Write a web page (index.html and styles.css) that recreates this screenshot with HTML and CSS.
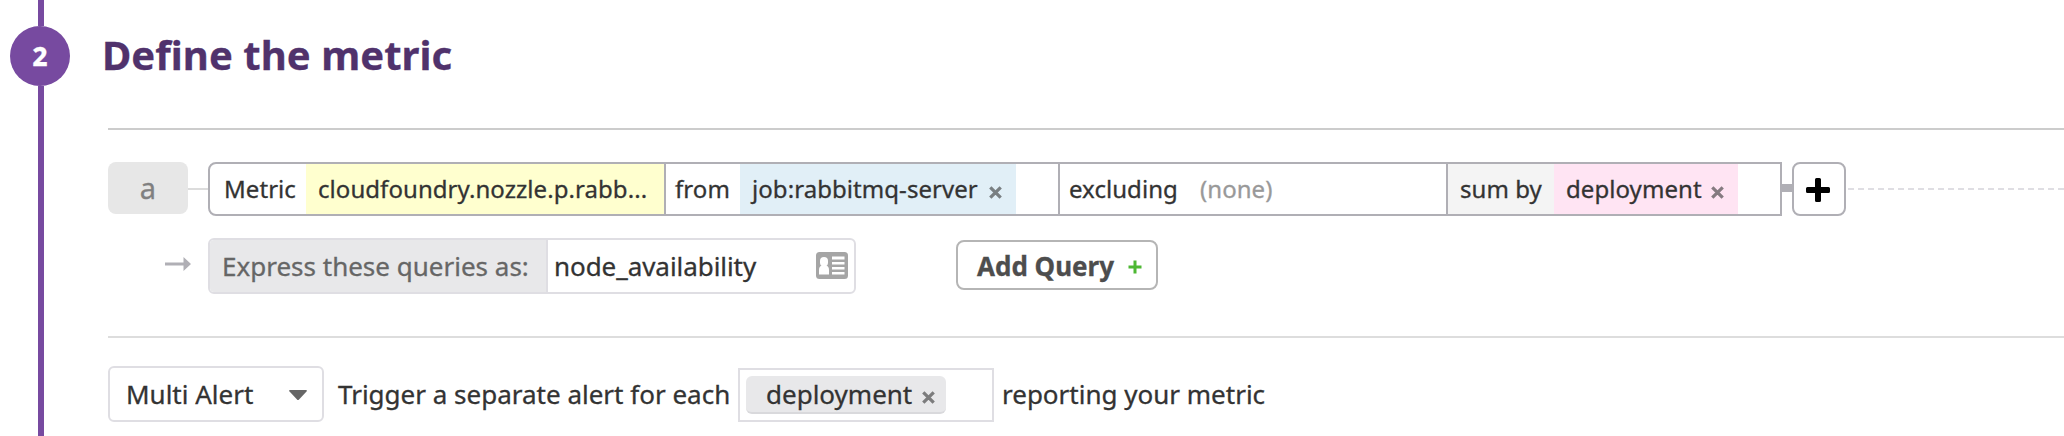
FILE: index.html
```html
<!DOCTYPE html>
<html lang="en">
<head>
<meta charset="utf-8">
<title>Define the metric</title>
<link rel="stylesheet" href="styles.css">
</head>
<body>
<main class="step">
  <aside class="rail">
    <div class="rail-line rail-top"></div>
    <div class="step-number">2</div>
    <div class="rail-line rail-bottom"></div>
  </aside>
  <section class="content">
    <h1 class="title">Define the metric</h1>
    <div class="query-area">
      <div class="query-row">
        <div class="query-letter">a</div>
        <div class="link"></div>
        <div class="query-box">
          <div class="cell cell-metric"><span class="label">Metric</span><span class="token token-metric">cloudfoundry.nozzle.p.rabb...</span></div>
          <div class="cell cell-from"><span class="label">from</span><span class="token token-from">job:rabbitmq-server<svg class="x" viewBox="0 0 12 12"><path d="M1.2 1.2 10.8 10.8M10.8 1.2 1.2 10.8"/></svg></span></div>
          <div class="cell cell-excluding"><span class="label">excluding</span><span class="none">(none)</span></div>
          <div class="cell cell-sum"><span class="label">sum by</span><span class="token token-sum">deployment<svg class="x" viewBox="0 0 12 12"><path d="M1.2 1.2 10.8 10.8M10.8 1.2 1.2 10.8"/></svg></span></div>
        </div>
        <div class="thick-link"></div>
        <button class="plus-button" aria-label="Add function"><svg class="plus" viewBox="0 0 24 24"><path d="M10.5 0h3a1.5 1.5 0 0 1 1.5 1.5V9h7.5A1.5 1.5 0 0 1 24 10.500v3a1.500 1.500 0 0 1-1.500 1.500H15v7.500a1.500 1.500 0 0 1-1.500 1.500h-3A1.500 1.500 0 0 1 9 22.500V15H1.500A1.500 1.500 0 0 1 0 13.500v-3A1.500 1.500 0 0 1 1.500 9H9V1.500A1.500 1.500 0 0 1 10.500 0z"/></svg></button>
        <div class="dashes"></div>
      </div>
      <div class="express-row">
        <svg class="arrow" viewBox="0 0 26 14"><path d="M0 5.500h18.500V0L26 7l-7.500 7V8.500H0z"/></svg>
        <div class="express-box">
          <div class="express-label">Express these queries as:</div>
          <div class="express-value"><span>node_availability</span>
            <svg class="card" viewBox="0 0 32 27"><rect width="32" height="27" rx="3.500" fill="#a5a5a5"/><g fill="#fff"><rect x="4" y="5" width="8" height="9.500" rx="4"/><path d="M3 22.500V18q0-4 3-4.500h4q3 .5 3 4.500v4.500zM16 4.500h12.500v3H16zM16 10h12.500v2.500H16zM16 15h12.500v2.500H16zM16 20h12.500v2.500H16z"/></g></svg>
          </div>
        </div>
        <button class="add-query"><span>Add Query</span><svg class="green" viewBox="0 0 14 14"><path d="M7 .5v13M.5 7h13"/></svg></button>
      </div>
    </div>
    <div class="alert-row">
      <div class="select"><span>Multi Alert</span><svg class="caret" viewBox="0 0 18 10"><path d="M1 0h16q1.500 0 .5 1.500L10 9.500q-1 1-2 0L.5 1.500Q-.5 0 1 0z"/></svg></div>
      <span class="trigger">Trigger a separate alert for each</span>
      <div class="group-box"><span class="chip">deployment<svg class="x" viewBox="0 0 12 12"><path d="M1.2 1.2 10.8 10.8M10.8 1.2 1.2 10.8"/></svg></span></div>
      <span class="reporting">reporting your metric</span>
    </div>
  </section>
</main>
</body>
</html>
```
FILE: styles.css
```css
* { box-sizing: border-box; }
body {
  margin: 0;
  background: #fff;
  color: #333;
  font: 26px/36px "Noto Sans", sans-serif;
  -webkit-text-stroke-width: .3px;
  overflow: hidden;
}
svg { display: block; flex: none; }
button { font: inherit; background: #fff; padding: 0; margin: 0; }
span { white-space: nowrap; }

.step { display: flex; height: 436px; }

/* Step rail */
.rail { width: 104px; flex: none; padding-left: 10px; display: flex; flex-direction: column; }
.rail-line { width: 6px; margin-left: 28px; background: #774aa0; }
.rail-top { height: 26px; }
.rail-bottom { flex: 1; }
.step-number {
  width: 60px; height: 60px; border-radius: 50%;
  background: #774aa0; color: #fff;
  font-weight: 800; font-size: 26px; line-height: 60px; text-align: center;
}

.content { flex: 1; min-width: 0; padding-left: 4px; }
.title {
  height: 128px; margin: 0 0 0 -6px; padding-top: 27px;
  font-size: 40px; line-height: 56px; letter-spacing: .06px; color: #50326c;
}

/* Query builder */
.query-area {
  height: 210px; padding-top: 32px;
  border-top: 2px solid #ccc; border-bottom: 2px solid #ddd;
}
.query-row { display: flex; height: 54px; font-size: 24px; letter-spacing: .06px; }
.query-letter {
  width: 80px; height: 52px; border-radius: 8px; background: #e7e7e7;
  color: #808080; font-size: 29px; line-height: 51px; text-align: center;
}
.link { width: 20px; height: 2px; margin-top: 26px; background: #dcdcdc; }
.query-box { display: flex; width: 1574px; height: 54px; border: 2px solid #b0afb5; border-radius: 8px 0 0 8px; line-height: 50px; }
.cell { display: flex; border-right: 2px solid #b0afb5; }
.cell-metric { width: 456px; }
.cell-from { width: 394px; }
.cell-excluding { width: 388px; }
.cell-sum { width: 332px; border-right: 0; }
.cell-metric .label { width: 96px; padding-left: 14px; }
.cell-from .label { width: 74px; padding-left: 9px; }
.cell-excluding .label { width: 140px; padding-left: 9px; }
.cell-sum .label { width: 106px; padding-left: 12px; background: #f4f4f4; }
.none { color: #999; }
.token { display: flex; padding-left: 12px; }
.token-metric { width: 358px; background: #ffffcf; }
.token-from { width: 276px; background: #e1eff7; }
.token-sum { width: 184px; background: #ffe4f3; }
.x { width: 13px; height: 13px; margin: 22px 14px 0 auto; stroke: #333; stroke-opacity: .6; stroke-width: 3; fill: none; }
.thick-link { width: 10px; height: 8px; margin-top: 22px; background: #b0afb5; }
.plus-button { width: 54px; height: 54px; border: 2px solid #b0afb5; border-radius: 8px; padding-top: 2px; }
.plus { width: 24px; height: 24px; margin: 0 auto 0 12px; fill: #000; }
.dashes { flex: 1; height: 2px; margin: 26px 0 0 2px; background: repeating-linear-gradient(to right, #dfdee3 0 6px, transparent 6px 10px); }

.express-row { display: flex; margin-top: 22px; padding-left: 57px; }
.arrow { width: 26px; height: 14px; margin: 19px 17px 0 0; fill: #b0afb5; }
.express-box { display: flex; width: 648px; height: 56px; border: 2px solid #dfdee3; border-radius: 6px; line-height: 52px; overflow: hidden; }
.express-label { width: 338px; padding-left: 12px; white-space: nowrap; background: #e8e8ea; color: #666; border-right: 2px solid #dfdee3; }
.express-value { display: flex; flex: 1; justify-content: space-between; padding: 0 6px; letter-spacing: -.06px; }
.card { width: 32px; height: 27px; margin-top: 12px; }
.add-query {
  display: flex; width: 202px; height: 50px; margin: 2px 0 0 100px; padding: 2px 14px 0 19px;
  border: 2px solid #b5b5b5; border-radius: 8px;
  justify-content: space-between; align-items: center;
  color: #4d4d4d; font-weight: 700; line-height: 46px;
}
.green { width: 14px; height: 14px; margin-top: 2px; stroke: #4db833; stroke-width: 3; }

/* Alert grouping */
.alert-row { display: flex; padding-top: 28px; line-height: 52px; }
.select { display: flex; width: 216px; height: 56px; padding: 0 15px 0 16px; border: 2px solid #dfdee3; border-radius: 6px; justify-content: space-between; align-items: center; }
.caret { width: 18px; height: 10px; margin-top: 2px; fill: #666; }
.trigger { width: 400px; margin-left: 14px; padding-top: 2px; }
.group-box { width: 256px; height: 54px; margin: 2px 8px 0 0; padding: 6px; border: 2px solid #dfdee3; }
.chip { display: flex; width: 200px; height: 38px; padding-left: 20px; border-radius: 6px; background: #e8e8ea; border-bottom: 2px solid #d9d9dc; line-height: 36px; }
.chip .x { margin: 15px 11px 0 auto; }
.reporting { padding-top: 2px; }
```
